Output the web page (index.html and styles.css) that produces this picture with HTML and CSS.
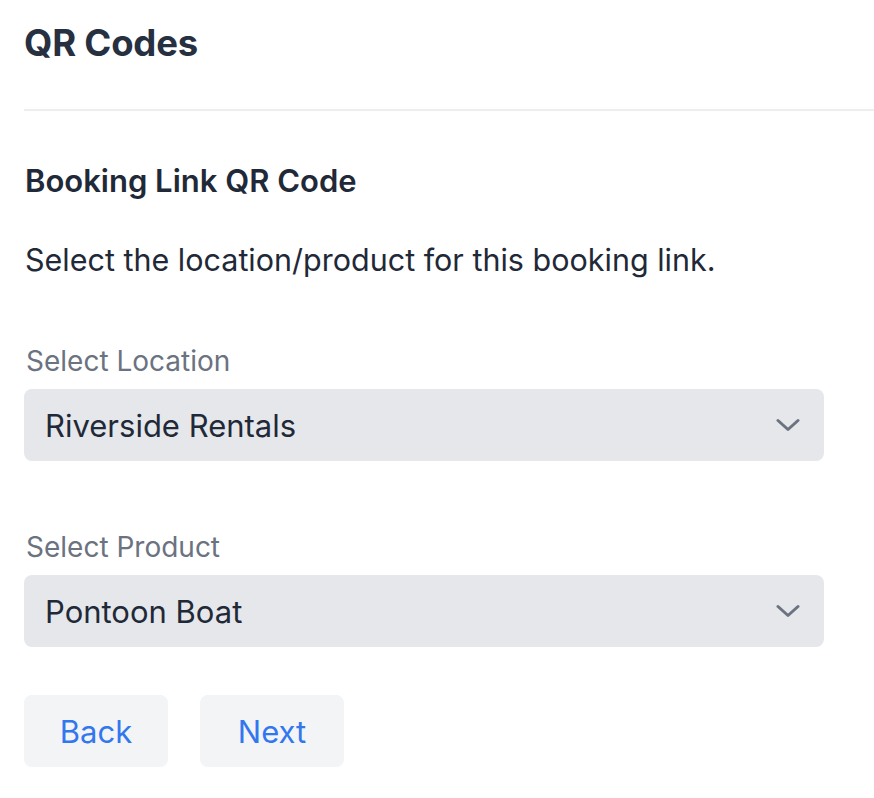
FILE: index.html
```html
<!DOCTYPE html>
<html lang="en">
<head>
<meta charset="utf-8">
<title>QR Codes</title>
<link rel="stylesheet" href="styles.css">
</head>
<body>
<div class="page">
  <header class="page-header">
    <h1 class="page-title">QR Codes</h1>
  </header>
  <section class="panel">
    <h2 class="panel-title">Booking Link QR Code</h2>
    <p class="panel-desc">Select the location/product for this booking link.</p>
    <div class="field field-location">
      <label class="field-label">Select Location</label>
      <div class="select">
        <span class="select-value">Riverside Rentals</span>
        <svg class="chevron" width="24" height="14" viewBox="0 0 24 14"><path d="M2 2.5 L12 11.5 L22 2.5" fill="none" stroke="#6b7280" stroke-width="3" stroke-linecap="round" stroke-linejoin="round"/></svg>
      </div>
    </div>
    <div class="field field-product">
      <label class="field-label">Select Product</label>
      <div class="select">
        <span class="select-value">Pontoon Boat</span>
        <svg class="chevron" width="24" height="14" viewBox="0 0 24 14"><path d="M2 2.5 L12 11.5 L22 2.5" fill="none" stroke="#6b7280" stroke-width="3" stroke-linecap="round" stroke-linejoin="round"/></svg>
      </div>
    </div>
    <div class="actions">
      <button class="btn">Back</button>
      <button class="btn">Next</button>
    </div>
  </section>
</div>
</body>
</html>
```
FILE: styles.css
```css
html, body {
  margin: 0;
  padding: 0;
  background: #ffffff;
}
body {
  font-family: Inter, "Noto Sans", sans-serif;
  color: #1f2937;
}
.page {
  padding-left: 24px;
}
.page-header {
  padding-top: 21px;
  height: 88px;
  border-bottom: 2px solid #eeeeee;
  box-sizing: content-box;
}
.page-title {
  margin: 0;
  font-size: 36.5px;
  line-height: 44px;
  font-weight: 700;
  color: #263041;
  letter-spacing: -0.2px;
}
.panel {
  padding-top: 51px;
}
.panel-title {
  margin: 0;
  font-size: 31px;
  line-height: 38px;
  font-weight: 600;
  color: #1f2937;
  padding-left: 1px;
}
.panel-desc {
  margin: 42px 0 0 0;
  font-size: 30.5px;
  line-height: 36px;
  font-weight: 400;
  color: #1f2937;
  padding-left: 1px;
}
.field {
  width: 800px;
}
.field-location {
  margin-top: 66px;
}
.field-product {
  margin-top: 69px;
}
.field-label {
  display: block;
  font-size: 28px;
  line-height: 34px;
  color: #6b7280;
  padding-left: 2px;
  margin-bottom: 11px;
}
.select {
  display: flex;
  align-items: center;
  justify-content: space-between;
  height: 72px;
  background: #e5e7eb;
  border-radius: 8px;
  padding: 0 24px 0 21px;
}
.select-value {
  font-size: 31px;
  color: #1f2937;
}
.chevron {
  display: block;
}
.actions {
  display: flex;
  gap: 32px;
  margin-top: 48px;
}
.btn {
  width: 144px;
  height: 72px;
  border: none;
  border-radius: 8px;
  background: #f3f4f6;
  color: #3377ee;
  font-family: Inter, "Noto Sans", sans-serif;
  font-size: 31px;
  padding: 0;
}
```
